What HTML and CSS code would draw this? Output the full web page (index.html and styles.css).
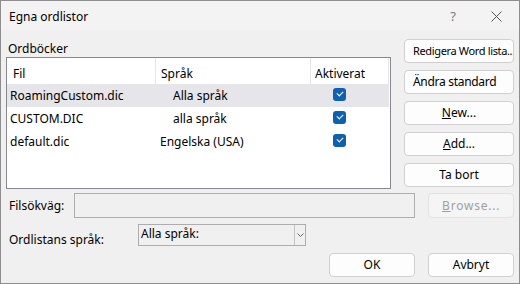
FILE: index.html
```html
<!DOCTYPE html>
<html lang="sv">
<head>
    <meta charset="UTF-8">
    <title>Egna ordlistor</title>
    <link rel="stylesheet" href="styles.css">
</head>
<body>
    <div class="dialog">
        <div class="titlebar">
            <span class="title">Egna ordlistor</span>
            <span class="help">?</span>
            <svg class="close" width="11" height="11" viewBox="0 0 11 11">
                <path d="M0.5 0.5 L10.5 10.5 M10.5 0.5 L0.5 10.5" stroke="#555" stroke-width="1" fill="none"/>
            </svg>
        </div>

        <div class="content">
            <div class="top">
                <div class="left">
                    <div class="group-label">Ordböcker</div>
                    <div class="listbox">
                        <div class="row header">
                            <div class="cell col-file">Fil</div>
                            <div class="cell col-lang">Språk</div>
                            <div class="cell col-active">Aktiverat</div>
                        </div>
                        <div class="row selected">
                            <div class="cell col-file">RoamingCustom.dic</div>
                            <div class="cell col-lang indent">Alla språk</div>
                            <div class="cell col-active"><span class="check"></span></div>
                        </div>
                        <div class="row">
                            <div class="cell col-file">CUSTOM.DIC</div>
                            <div class="cell col-lang indent">alla språk</div>
                            <div class="cell col-active"><span class="check"></span></div>
                        </div>
                        <div class="row">
                            <div class="cell col-file">default.dic</div>
                            <div class="cell col-lang">Engelska (USA)</div>
                            <div class="cell col-active"><span class="check"></span></div>
                        </div>
                    </div>
                </div>

                <div class="side">
                    <button class="btn btn-left btn-narrow">Redigera Word lista...</button>
                    <button class="btn btn-left">Ändra standard</button>
                    <button class="btn"><u>N</u>ew...</button>
                    <button class="btn"><u>A</u>dd...</button>
                    <button class="btn">Ta bort</button>
                </div>
            </div>

            <div class="path-row">
                <span class="field-label">Filsökväg:</span>
                <div class="path-input"></div>
                <button class="btn btn-small" disabled><u>B</u>rowse...</button>
            </div>

            <div class="lang-row">
                <span class="field-label lang-label">Ordlistans språk:</span>
                <div class="select">
                    <span class="select-text">Alla språk:</span>
                    <span class="select-arrow">
                        <svg width="7" height="5" viewBox="0 0 7 5">
                            <path d="M0.5 0.5 L3.5 3.5 L6.5 0.5" stroke="#666" stroke-width="1" fill="none"/>
                        </svg>
                    </span>
                </div>
            </div>

            <div class="footer">
                <button class="btn btn-ok">OK</button>
                <button class="btn btn-small">Avbryt</button>
            </div>
        </div>
    </div>
</body>
</html>
```

FILE: styles.css
```css
* {
    margin: 0;
    padding: 0;
    box-sizing: border-box;
}

body {
    font-family: "Noto Sans", "Liberation Sans", sans-serif;
    font-size: 12px;
    color: #000;
    background: #f0f0f0;
}

.dialog {
    width: 520px;
    height: 284px;
    border: 1px solid #8e8e8e;
    background: #f0f0f0;
}

.titlebar {
    height: 29px;
    background: #f3f3f3;
    display: flex;
    align-items: center;
    padding-left: 8px;
}

.title {
    flex: 1;
    font-size: 12px;
    line-height: 14px;
    padding-top: 2px;
}

.help {
    color: #7a7a7a;
    font-size: 13px;
    margin-right: 35px;
    padding-top: 1px;
}

.close {
    margin-right: 17px;
    margin-top: 1px;
}

.content {
    padding: 0 5px 0 5px;
}

.top {
    display: flex;
    align-items: flex-start;
    gap: 13px;
}

.left {
    width: 385px;
    padding-top: 12px;
}

.group-label {
    height: 15px;
    line-height: 14px;
    padding-left: 2px;
}

.listbox {
    height: 132px;
    border: 1px solid #868991;
    background: #fff;
}

.row {
    display: flex;
    height: 23px;
    align-items: center;
    line-height: 14px;
}

.row.header {
    height: 26px;
    padding-top: 4px;
}

.row.header .cell {
    height: 26px;
    display: flex;
    align-items: center;
    padding-top: 5px;
    border-right: 1px solid #e5e5e5;
    margin-top: -4px;
}

.row.selected {
    background: #e5e5ea;
    margin-right: 1px;
}

.cell {
    white-space: nowrap;
}

.col-file {
    width: 149px;
    padding-left: 3px;
}

.col-lang {
    width: 155px;
    padding-left: 4px;
}

.col-active {
    width: 78px;
    padding-left: 22px;
}

.header .col-file {
    padding-left: 6px;
}

.header .col-lang {
    padding-left: 5px;
}

.header .col-active {
    padding-left: 4px;
}

.indent {
    padding-left: 17px;
}

.check {
    display: block;
    width: 13px;
    height: 13px;
    border-radius: 3px;
    background: #0f5fb3;
    position: relative;
    margin-top: -2px;
}

.check::after {
    content: "";
    position: absolute;
    left: 4px;
    top: 3px;
    width: 5px;
    height: 3px;
    border-left: 1px solid #fff;
    border-bottom: 1px solid #fff;
    transform: rotate(-45deg);
}

.side {
    width: 110px;
    padding-top: 9px;
    display: flex;
    flex-direction: column;
    gap: 7px;
}

.btn {
    font-family: inherit;
    font-size: 12px;
    height: 24px;
    background: #fdfdfd;
    border: 1px solid #d0d0d0;
    border-radius: 4px;
    color: #000;
    text-align: center;
    white-space: nowrap;
    overflow: hidden;
    line-height: 14px;
}

.btn-left {
    text-align: left;
    padding-left: 8px;
    letter-spacing: -0.3px;
}

.btn-narrow {
    font-size: 11px;
    letter-spacing: -0.35px;
    padding-left: 8px;
    padding-right: 0;
}

.btn:disabled {
    color: #a0a0a0;
    border-color: #e2e2e2;
    background: #f5f5f5;
    letter-spacing: 0.8px;
}

.btn-small {
    width: 86px;
    height: 25px;
}

.btn-ok {
    width: 86px;
    height: 24px;
}

.path-row {
    display: flex;
    align-items: center;
    margin-top: 4px;
}

.field-label {
    padding-left: 3px;
    line-height: 14px;
}

.path-input {
    width: 343px;
    height: 25px;
    border: 1px solid #adadad;
    background: #f0f0f0;
    margin-left: 10px;
    margin-right: 13px;
}

.lang-row {
    display: flex;
    align-items: flex-start;
    margin-top: 6px;
}

.lang-label {
    padding-top: 9px;
    width: 132px;
}

.select {
    width: 168px;
    height: 22px;
    border: 1px solid #adadad;
    background: #f0f0f0;
    display: flex;
}

.select-text {
    flex: 1;
    padding-left: 2px;
    line-height: 18px;
}

.select-arrow {
    width: 11px;
    border-left: 1px solid #c4c4c4;
    display: flex;
    align-items: center;
    justify-content: center;
    padding-top: 1px;
}

.footer {
    display: flex;
    justify-content: flex-end;
    gap: 13px;
    margin-top: 6px;
}

.footer .btn {
    height: 24px;
}
```
